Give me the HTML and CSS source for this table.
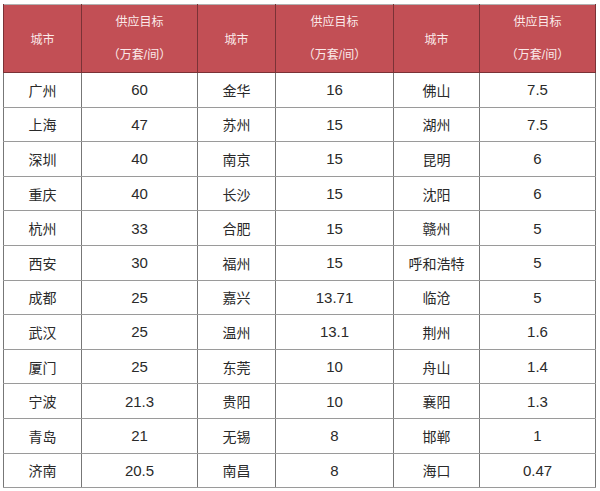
FILE: index.html
```html
<!DOCTYPE html>
<html lang="zh">
<head>
<meta charset="utf-8">
<link rel="stylesheet" href="styles.css">
</head>
<body>
<table class="t">
<colgroup>
<col class="c1"><col class="c2"><col class="c3"><col class="c4"><col class="c5"><col class="c6">
</colgroup>
<thead>
<tr>
<th>城市</th><th><div class="l1">供应目标</div><div class="l2">（万套/间）</div></th>
<th>城市</th><th><div class="l1">供应目标</div><div class="l2">（万套/间）</div></th>
<th>城市</th><th><div class="l1">供应目标</div><div class="l2">（万套/间）</div></th>
</tr>
</thead>
<tbody>
<tr><td>广州</td><td class="n">60</td><td>金华</td><td class="n">16</td><td>佛山</td><td class="n">7.5</td></tr>
<tr><td>上海</td><td class="n">47</td><td>苏州</td><td class="n">15</td><td>湖州</td><td class="n">7.5</td></tr>
<tr><td>深圳</td><td class="n">40</td><td>南京</td><td class="n">15</td><td>昆明</td><td class="n">6</td></tr>
<tr><td>重庆</td><td class="n">40</td><td>长沙</td><td class="n">15</td><td>沈阳</td><td class="n">6</td></tr>
<tr><td>杭州</td><td class="n">33</td><td>合肥</td><td class="n">15</td><td>赣州</td><td class="n">5</td></tr>
<tr><td>西安</td><td class="n">30</td><td>福州</td><td class="n">15</td><td>呼和浩特</td><td class="n">5</td></tr>
<tr><td>成都</td><td class="n">25</td><td>嘉兴</td><td class="n">13.71</td><td>临沧</td><td class="n">5</td></tr>
<tr><td>武汉</td><td class="n">25</td><td>温州</td><td class="n">13.1</td><td>荆州</td><td class="n">1.6</td></tr>
<tr><td>厦门</td><td class="n">25</td><td>东莞</td><td class="n">10</td><td>舟山</td><td class="n">1.4</td></tr>
<tr><td>宁波</td><td class="n">21.3</td><td>贵阳</td><td class="n">10</td><td>襄阳</td><td class="n">1.3</td></tr>
<tr><td>青岛</td><td class="n">21</td><td>无锡</td><td class="n">8</td><td>邯郸</td><td class="n">1</td></tr>
<tr><td>济南</td><td class="n">20.5</td><td>南昌</td><td class="n">8</td><td>海口</td><td class="n">0.47</td></tr>
</tbody>
</table>
</body>
</html>
```
FILE: styles.css
```css
html, body {
  margin: 0;
  padding: 0;
  background: #fff;
}
body {
  padding: 4px 0 0 3px;
  font-family: "Liberation Sans", "Noto Sans CJK SC", sans-serif;
}
.t {
  border-collapse: collapse;
  table-layout: fixed;
  width: 592px;
  border: 1px solid #b0b0b0;
}
.c1 { width: 78px; }
.c2 { width: 116px; }
.c3 { width: 78px; }
.c4 { width: 118px; }
.c5 { width: 86px; }
.c6 { width: 116px; }
th {
  background: #c24f55;
  color: #fbeaea;
  font-weight: normal;
  font-size: 12px;
  height: 67px;
  padding: 0;
  text-align: center;
  vertical-align: middle;
  border-left: 1px solid #7a3236;
  border-right: 1px solid #7a3236;
  border-bottom: 1px solid #7a3236;
}
th .l1 {
  line-height: 16px;
  margin-bottom: 17px;
}
th .l2 {
  line-height: 16px;
}
td {
  height: 33.6px;
  padding: 0;
  text-align: center;
  vertical-align: middle;
  font-size: 14px;
  color: #2a2a2a;
  border-left: 1px solid #777;
  border-right: 1px solid #777;
  border-bottom: 1px solid #9a9a9a;
}
td.n {
  font-size: 15px;
}
```
